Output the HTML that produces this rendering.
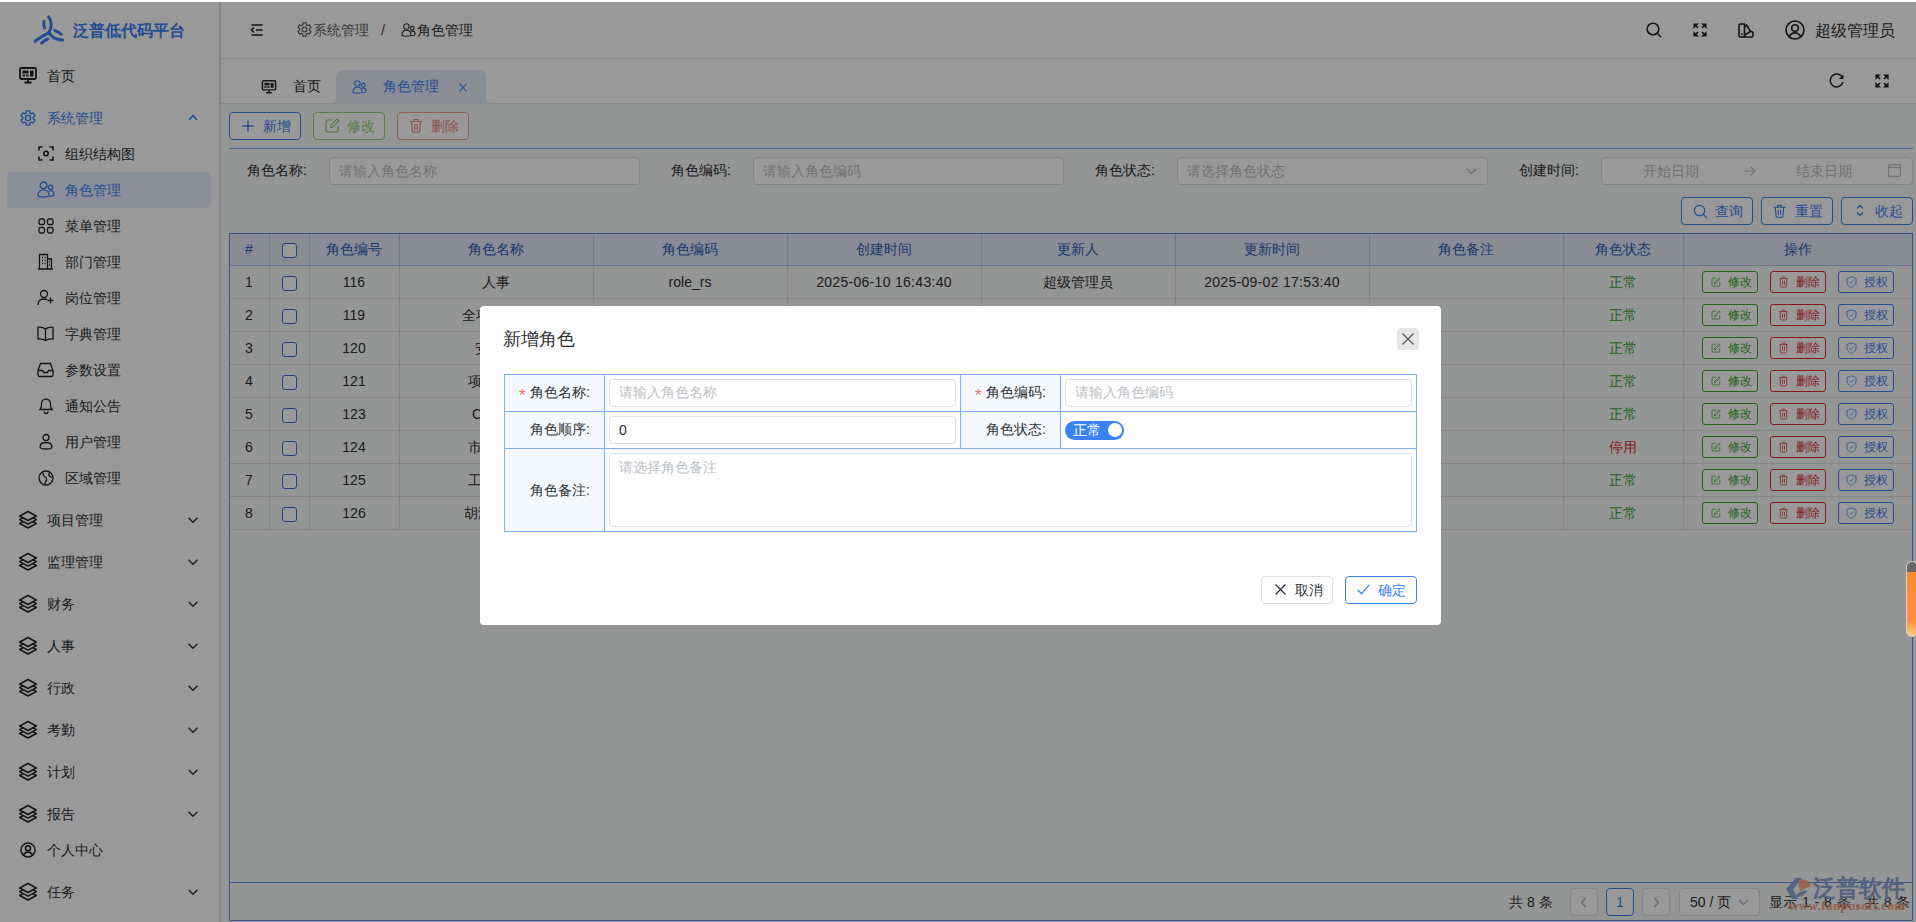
<!DOCTYPE html>
<html><head><meta charset="utf-8">
<style>
*{box-sizing:border-box;margin:0;padding:0}
html,body{width:1916px;height:922px;overflow:hidden;background:#fff}
body{font-family:"Liberation Sans",sans-serif;font-size:14px;color:#303133;position:relative}
.a{position:absolute}
.t{position:absolute;white-space:nowrap;line-height:1}
svg{position:absolute;overflow:visible}
.ic{fill:none;stroke:#303133;stroke-width:1.4;stroke-linecap:round;stroke-linejoin:round}
#side{left:0;top:0;width:221px;height:922px;background:#fff;border-right:2px solid #dcdfe6}
#hdr{left:221px;top:0;width:1695px;height:59px;background:#fff;border-bottom:1px solid #e4e7ed}
#tabs{left:221px;top:59px;width:1695px;height:45px;background:#fff;border-bottom:1px solid #e4e7ed}
#main{left:221px;top:104px;width:1695px;height:818px;background:#f7f8f8}
.btn{position:absolute;height:28px;border:1px solid;border-radius:4px;background:#fff;font-size:14px}
.inp{position:absolute;height:28px;border:1px solid #dcdfe6;border-radius:4px;background:#fff}
.ph{color:#bcbfc6}
#mask{left:0;top:2px;width:1916px;height:920px;background:rgba(0,0,0,.4)}
#topline{left:0;top:0;width:1916px;height:2px;background:#fff}
</style></head><body>
<!-- SIDEBAR -->
<div id="side" class="a"></div>
<div id="hdr" class="a"></div>
<div id="tabs" class="a"></div>
<div id="main" class="a"></div>
<!-- logo -->
<svg style="left:33px;top:15px" width="32" height="30" viewBox="0 0 32 30">
<g fill="none" stroke="#3a7ff5" stroke-width="3" stroke-linecap="round">
<path d="M15.5 1.8 C18.8 5.5 19.2 12.5 16 17.5 C18.5 22 23 25 29.8 25"/>
<path d="M16 17.5 C12 20 6 22.5 2.1 26.3"/>
<path d="M10.9 6.5 C10.6 8.5 10.8 11 11.5 13"/>
<path d="M22 15.6 C24 16.3 26.5 17.5 28.2 19.2"/>
<path d="M8.6 28 C10.5 26.5 12.5 24.8 14.8 24"/>
</g></svg>
<div class="t" style="left:73px;top:23px;font-size:16px;font-weight:bold;color:#3a7ff5;letter-spacing:0px">泛普低代码平台</div>

<!-- 首页 -->
<svg style="left:19px;top:67px" width="18" height="17" viewBox="0 0 18 17">
<rect x="1" y="1" width="16" height="11" rx="1.5" fill="none" stroke="#222" stroke-width="1.8"/>
<rect x="3.5" y="3.5" width="6" height="3" fill="#222"/><rect x="11" y="3.5" width="3.5" height="6" fill="#222"/>
<rect x="3.5" y="7.5" width="2.5" height="2" fill="#222"/><rect x="7" y="7.5" width="2.5" height="2" fill="#222"/>
<path d="M9 12 V15 M5.5 15.5 H12.5" stroke="#222" stroke-width="1.8"/>
</svg>
<div class="t" style="left:47px;top:69px;font-size:14px;color:#303133">首页</div>

<!-- 系统管理 -->
<svg style="left:20px;top:110px" width="16" height="16" viewBox="0 0 16 16"><g fill="none" stroke="#3b82f6" stroke-width="1.4" stroke-linejoin="round"><path d="M6.23 0.92 L9.77 0.92 L9.90 3.05 L11.34 3.88 L13.25 2.93 L15.02 5.99 L13.23 7.17 L13.23 8.83 L15.02 10.01 L13.25 13.07 L11.34 12.12 L9.90 12.95 L9.77 15.08 L6.23 15.08 L6.10 12.95 L4.66 12.12 L2.75 13.07 L0.98 10.01 L2.77 8.83 L2.77 7.17 L0.98 5.99 L2.75 2.93 L4.66 3.88 L6.10 3.05Z"/><circle cx="8" cy="8" r="2.6"/></g></svg>
<div class="t" style="left:47px;top:111px;font-size:14px;color:#3b82f6">系统管理</div>
<svg style="left:188px;top:114px" width="10" height="7" viewBox="0 0 10 7"><path d="M1 6 L5 1.5 L9 6" fill="none" stroke="#3b82f6" stroke-width="1.5"/></svg>

<!-- active bg -->
<div class="a" style="left:7px;top:172px;width:204px;height:36px;background:#e6effd;border-radius:5px"></div>

<!-- sub items -->
<svg style="left:38px;top:146px" width="16" height="15" viewBox="0 0 16 15"><g fill="none" stroke="#222" stroke-width="1.6"><path d="M1 4.5V1h3.5M11.5 1H15v3.5M15 10.5V14h-3.5M4.5 14H1v-3.5"/><circle cx="8" cy="7.5" r="2.2"/></g></svg>
<div class="t" style="left:65px;top:147px">组织结构图</div>

<svg style="left:37px;top:181px" width="18" height="17" viewBox="0 0 18 17"><g fill="none" stroke="#3b82f6" stroke-width="1.3"><circle cx="6.5" cy="4.3" r="3.3"/><path d="M1 14.3C1 10.8 3.5 8.8 6.5 8.8S12 10.8 12 14.3C12 15.5 10.5 16 6.5 16S1 15.5 1 14.3z"/><circle cx="13.6" cy="6.3" r="2.2"/><path d="M11.6 10.2C12.2 9.8 12.9 9.6 13.6 9.6 15.6 9.6 17 11.3 17 13.3 17 14.8 15.8 15.4 12.3 15.4"/></g></svg>
<div class="t" style="left:65px;top:183px;color:#3b82f6">角色管理</div>

<svg style="left:38px;top:218px" width="16" height="16" viewBox="0 0 16 16"><g fill="none" stroke="#222" stroke-width="1.3"><rect x="1" y="1" width="5.5" height="5.5" rx="1.5"/><rect x="9.5" y="1" width="5.5" height="5.5" rx="1.5"/><rect x="1" y="9.5" width="5.5" height="5.5" rx="1.5"/><rect x="9.5" y="9.5" width="5.5" height="5.5" rx="1.5"/></g></svg>
<div class="t" style="left:65px;top:219px">菜单管理</div>

<svg style="left:37px;top:253px" width="17" height="17" viewBox="0 0 17 17"><g fill="none" stroke="#222" stroke-width="1.3"><path d="M1 16H16M2.5 16V1.5H10.5V16M10.5 6H14.5V16"/><path d="M5 4.5h1M7.5 4.5h1M5 7.5h1M7.5 7.5h1M5 10.5h1M7.5 10.5h1M12 9h1M12 12h1"/></g></svg>
<div class="t" style="left:65px;top:255px">部门管理</div>

<svg style="left:37px;top:289px" width="17" height="17" viewBox="0 0 17 17"><g fill="none" stroke="#222" stroke-width="1.3"><circle cx="7" cy="5" r="3.5"/><path d="M1 16c0-4 2.7-6 6-6 1.3 0 2.3.3 3.2.8"/><path d="M13.5 8.5v6M10.5 11.5h6"/></g></svg>
<div class="t" style="left:65px;top:291px">岗位管理</div>

<svg style="left:37px;top:326px" width="17" height="15" viewBox="0 0 17 15"><g fill="none" stroke="#222" stroke-width="1.3"><path d="M8.5 3C6.5 1.5 3.5 1 1 1.3V13c2.5-.3 5.5.2 7.5 1.5C10.5 13.2 13.5 12.7 16 13V1.3C13.5 1 10.5 1.5 8.5 3z"/><path d="M8.5 3V14.5"/></g></svg>
<div class="t" style="left:65px;top:327px">字典管理</div>

<svg style="left:37px;top:362px" width="17" height="15" viewBox="0 0 17 15"><g fill="none" stroke="#222" stroke-width="1.3"><path d="M1 8.5L3.5 1.5H13.5L16 8.5V13a1.5 1.5 0 0 1-1.5 1.5H2.5A1.5 1.5 0 0 1 1 13z"/><path d="M1 8.5H5.5L6.5 10.5H10.5L11.5 8.5H16"/></g></svg>
<div class="t" style="left:65px;top:363px">参数设置</div>

<svg style="left:38px;top:397px" width="16" height="17" viewBox="0 0 16 17"><g fill="none" stroke="#222" stroke-width="1.3"><path d="M2 12.5H14C13 11.5 12.5 10 12.5 8V6.5a4.5 4.5 0 0 0-9 0V8C3.5 10 3 11.5 2 12.5z"/><path d="M6 14.5a2 2 0 0 0 4 0"/></g></svg>
<div class="t" style="left:65px;top:399px">通知公告</div>

<svg style="left:38px;top:433px" width="16" height="17" viewBox="0 0 16 17"><g fill="none" stroke="#222" stroke-width="1.3"><circle cx="8" cy="4.5" r="3"/><path d="M2 14C2 11.2 4.6 9.5 8 9.5S14 11.2 14 14C14 15.3 12.5 16 8 16S2 15.3 2 14z"/></g></svg>
<div class="t" style="left:65px;top:435px">用户管理</div>

<svg style="left:38px;top:470px" width="16" height="16" viewBox="0 0 16 16"><g fill="none" stroke="#222" stroke-width="1.3"><circle cx="8" cy="8" r="7"/><path d="M4.5 2C5.5 4 5 6 7 7s2 3 1 4-1 3-1 4M11.5 2.5c-1 1.5-1 3 .5 4s2.5.5 3 1"/></g></svg>
<div class="t" style="left:65px;top:471px">区域管理</div>
<svg style="left:19px;top:511px" width="18" height="18" viewBox="0 0 18 18"><g fill="#fff" stroke="#222" stroke-width="1.5" stroke-linejoin="round"><path d="M9 8L17.3 12.5 9 17 0.7 12.5z"/><path d="M9 4.2L17.3 8.7 9 13.2 0.7 8.7z"/><path d="M9 0.5L17.3 5 9 9.5 0.7 5z"/></g></svg>
<div class="t" style="left:47px;top:513px">项目管理</div>
<svg style="left:188px;top:517px" width="10" height="6" viewBox="0 0 10 6"><path d="M0.5 0.8 L5 5.2 L9.5 0.8" fill="none" stroke="#303133" stroke-width="1.4"/></svg>
<svg style="left:19px;top:553px" width="18" height="18" viewBox="0 0 18 18"><g fill="#fff" stroke="#222" stroke-width="1.5" stroke-linejoin="round"><path d="M9 8L17.3 12.5 9 17 0.7 12.5z"/><path d="M9 4.2L17.3 8.7 9 13.2 0.7 8.7z"/><path d="M9 0.5L17.3 5 9 9.5 0.7 5z"/></g></svg>
<div class="t" style="left:47px;top:555px">监理管理</div>
<svg style="left:188px;top:559px" width="10" height="6" viewBox="0 0 10 6"><path d="M0.5 0.8 L5 5.2 L9.5 0.8" fill="none" stroke="#303133" stroke-width="1.4"/></svg>
<svg style="left:19px;top:595px" width="18" height="18" viewBox="0 0 18 18"><g fill="#fff" stroke="#222" stroke-width="1.5" stroke-linejoin="round"><path d="M9 8L17.3 12.5 9 17 0.7 12.5z"/><path d="M9 4.2L17.3 8.7 9 13.2 0.7 8.7z"/><path d="M9 0.5L17.3 5 9 9.5 0.7 5z"/></g></svg>
<div class="t" style="left:47px;top:597px">财务</div>
<svg style="left:188px;top:601px" width="10" height="6" viewBox="0 0 10 6"><path d="M0.5 0.8 L5 5.2 L9.5 0.8" fill="none" stroke="#303133" stroke-width="1.4"/></svg>
<svg style="left:19px;top:637px" width="18" height="18" viewBox="0 0 18 18"><g fill="#fff" stroke="#222" stroke-width="1.5" stroke-linejoin="round"><path d="M9 8L17.3 12.5 9 17 0.7 12.5z"/><path d="M9 4.2L17.3 8.7 9 13.2 0.7 8.7z"/><path d="M9 0.5L17.3 5 9 9.5 0.7 5z"/></g></svg>
<div class="t" style="left:47px;top:639px">人事</div>
<svg style="left:188px;top:643px" width="10" height="6" viewBox="0 0 10 6"><path d="M0.5 0.8 L5 5.2 L9.5 0.8" fill="none" stroke="#303133" stroke-width="1.4"/></svg>
<svg style="left:19px;top:679px" width="18" height="18" viewBox="0 0 18 18"><g fill="#fff" stroke="#222" stroke-width="1.5" stroke-linejoin="round"><path d="M9 8L17.3 12.5 9 17 0.7 12.5z"/><path d="M9 4.2L17.3 8.7 9 13.2 0.7 8.7z"/><path d="M9 0.5L17.3 5 9 9.5 0.7 5z"/></g></svg>
<div class="t" style="left:47px;top:681px">行政</div>
<svg style="left:188px;top:685px" width="10" height="6" viewBox="0 0 10 6"><path d="M0.5 0.8 L5 5.2 L9.5 0.8" fill="none" stroke="#303133" stroke-width="1.4"/></svg>
<svg style="left:19px;top:721px" width="18" height="18" viewBox="0 0 18 18"><g fill="#fff" stroke="#222" stroke-width="1.5" stroke-linejoin="round"><path d="M9 8L17.3 12.5 9 17 0.7 12.5z"/><path d="M9 4.2L17.3 8.7 9 13.2 0.7 8.7z"/><path d="M9 0.5L17.3 5 9 9.5 0.7 5z"/></g></svg>
<div class="t" style="left:47px;top:723px">考勤</div>
<svg style="left:188px;top:727px" width="10" height="6" viewBox="0 0 10 6"><path d="M0.5 0.8 L5 5.2 L9.5 0.8" fill="none" stroke="#303133" stroke-width="1.4"/></svg>
<svg style="left:19px;top:763px" width="18" height="18" viewBox="0 0 18 18"><g fill="#fff" stroke="#222" stroke-width="1.5" stroke-linejoin="round"><path d="M9 8L17.3 12.5 9 17 0.7 12.5z"/><path d="M9 4.2L17.3 8.7 9 13.2 0.7 8.7z"/><path d="M9 0.5L17.3 5 9 9.5 0.7 5z"/></g></svg>
<div class="t" style="left:47px;top:765px">计划</div>
<svg style="left:188px;top:769px" width="10" height="6" viewBox="0 0 10 6"><path d="M0.5 0.8 L5 5.2 L9.5 0.8" fill="none" stroke="#303133" stroke-width="1.4"/></svg>
<svg style="left:19px;top:805px" width="18" height="18" viewBox="0 0 18 18"><g fill="#fff" stroke="#222" stroke-width="1.5" stroke-linejoin="round"><path d="M9 8L17.3 12.5 9 17 0.7 12.5z"/><path d="M9 4.2L17.3 8.7 9 13.2 0.7 8.7z"/><path d="M9 0.5L17.3 5 9 9.5 0.7 5z"/></g></svg>
<div class="t" style="left:47px;top:807px">报告</div>
<svg style="left:188px;top:811px" width="10" height="6" viewBox="0 0 10 6"><path d="M0.5 0.8 L5 5.2 L9.5 0.8" fill="none" stroke="#303133" stroke-width="1.4"/></svg>
<svg style="left:20px;top:842px" width="16" height="16" viewBox="0 0 16 16"><g fill="none" stroke="#222" stroke-width="1.5"><circle cx="8" cy="8" r="7"/><circle cx="8" cy="6.3" r="2.5"/><path d="M3.5 13c1-2 2.6-3 4.5-3s3.5 1 4.5 3"/></g></svg>
<div class="t" style="left:47px;top:843px">个人中心</div>
<svg style="left:19px;top:883px" width="18" height="18" viewBox="0 0 18 18"><g fill="#fff" stroke="#222" stroke-width="1.5" stroke-linejoin="round"><path d="M9 8L17.3 12.5 9 17 0.7 12.5z"/><path d="M9 4.2L17.3 8.7 9 13.2 0.7 8.7z"/><path d="M9 0.5L17.3 5 9 9.5 0.7 5z"/></g></svg>
<div class="t" style="left:47px;top:885px">任务</div>
<svg style="left:188px;top:889px" width="10" height="6" viewBox="0 0 10 6"><path d="M0.5 0.8 L5 5.2 L9.5 0.8" fill="none" stroke="#303133" stroke-width="1.4"/></svg>
<!-- header -->
<svg style="left:250px;top:24px" width="13" height="12" viewBox="0 0 13 12"><g fill="none" stroke="#222" stroke-width="1.6"><path d="M1.5 1H12.5M6 6H12.5M1.5 11H12.5"/><path d="M4 3.5L1.5 6 4 8.5"/></g></svg>
<svg style="left:297px;top:22px" width="15" height="15" viewBox="0 0 16 16"><g fill="none" stroke="#606266" stroke-width="1.3" stroke-linejoin="round"><path d="M6.23 0.92 L9.77 0.92 L9.90 3.05 L11.34 3.88 L13.25 2.93 L15.02 5.99 L13.23 7.17 L13.23 8.83 L15.02 10.01 L13.25 13.07 L11.34 12.12 L9.90 12.95 L9.77 15.08 L6.23 15.08 L6.10 12.95 L4.66 12.12 L2.75 13.07 L0.98 10.01 L2.77 8.83 L2.77 7.17 L0.98 5.99 L2.75 2.93 L4.66 3.88 L6.10 3.05Z"/><circle cx="8" cy="8" r="2.6"/></g></svg>
<div class="t" style="left:313px;top:23px;color:#606266">系统管理</div>
<div class="t" style="left:381px;top:22px;color:#555;font-size:15px">/</div>
<svg style="left:400px;top:23px" width="17" height="14" viewBox="0 0 18 17"><g fill="none" stroke="#303133" stroke-width="1.3"><circle cx="6.5" cy="4.3" r="3.3"/><path d="M1 14.3C1 10.8 3.5 8.8 6.5 8.8S12 10.8 12 14.3C12 15.5 10.5 16 6.5 16S1 15.5 1 14.3z"/><circle cx="13.6" cy="6.3" r="2.2"/><path d="M11.6 10.2C12.2 9.8 12.9 9.6 13.6 9.6 15.6 9.6 17 11.3 17 13.3 17 14.8 15.8 15.4 12.3 15.4"/></g></svg>
<div class="t" style="left:417px;top:23px;color:#303133">角色管理</div>

<svg style="left:1646px;top:22px" width="16" height="16" viewBox="0 0 16 16"><g fill="none" stroke="#222" stroke-width="1.6"><circle cx="7" cy="7" r="5.8"/><path d="M11.2 11.2L15 15"/></g></svg>
<svg style="left:1693px;top:23px" width="14" height="14" viewBox="0 0 14 14"><g fill="#222" stroke="#222" stroke-width="1.2"><path d="M1 1h3.5L1 4.5z M13 1H9.5L13 4.5z M1 13h3.5L1 9.5z M13 13H9.5L13 9.5z"/><path d="M1.5 1.5L5 5M12.5 1.5L9 5M1.5 12.5L5 9M12.5 12.5L9 9" stroke-width="1.6"/></g></svg>
<svg style="left:1738px;top:23px" width="16" height="15" viewBox="0 0 16 15"><g fill="none" stroke="#222" stroke-width="1.6" stroke-linejoin="round"><path d="M2.5 1H6.5V14H2.5A1.5 1.5 0 0 1 1 12.5V2.5A1.5 1.5 0 0 1 2.5 1z"/><path d="M6.5 3.5L8.5 2 12.5 8.5 6.5 12"/><path d="M6.5 14H13.5A1.5 1.5 0 0 0 15 12.5V10A1.5 1.5 0 0 0 13.5 8.5H11"/></g><circle cx="4" cy="11" r="0.9" fill="#222"/></svg>
<svg style="left:1785px;top:20px" width="20" height="20" viewBox="0 0 20 20"><g fill="none" stroke="#222" stroke-width="1.6"><circle cx="10" cy="10" r="9"/><circle cx="10" cy="8" r="3.3"/><path d="M4.3 16.5c1.3-2.4 3.3-3.6 5.7-3.6s4.4 1.2 5.7 3.6"/></g></svg>
<div class="t" style="left:1815px;top:23px;font-size:16px;color:#303133">超级管理员</div>

<!-- tabs -->
<svg style="left:261px;top:80px" width="16" height="14" viewBox="0 0 18 17"><rect x="1" y="1" width="16" height="11" rx="1.5" fill="none" stroke="#222" stroke-width="1.8"/><rect x="3.5" y="3.5" width="6" height="3" fill="#222"/><rect x="11" y="3.5" width="3.5" height="6" fill="#222"/><rect x="3.5" y="7.5" width="2.5" height="2" fill="#222"/><rect x="7" y="7.5" width="2.5" height="2" fill="#222"/><path d="M9 12 V15 M5.5 15.5 H12.5" stroke="#222" stroke-width="1.8"/></svg>
<div class="t" style="left:293px;top:79px;color:#303133">首页</div>
<svg style="left:328px;top:69px" width="166" height="35" viewBox="0 0 166 35"><path d="M0 34.5 C6 34.5 8 32 8 27 V9 C8 4 11 1 16 1 H150 C155 1 158 4 158 9 V27 C158 32 160 34.5 166 34.5 Z" fill="#e3ecfb"/></svg>
<svg style="left:352px;top:80px" width="15" height="14" viewBox="0 0 18 17"><g fill="none" stroke="#3b82f6" stroke-width="1.3"><circle cx="6.5" cy="4.3" r="3.3"/><path d="M1 14.3C1 10.8 3.5 8.8 6.5 8.8S12 10.8 12 14.3C12 15.5 10.5 16 6.5 16S1 15.5 1 14.3z"/><circle cx="13.6" cy="6.3" r="2.2"/><path d="M11.6 10.2C12.2 9.8 12.9 9.6 13.6 9.6 15.6 9.6 17 11.3 17 13.3 17 14.8 15.8 15.4 12.3 15.4"/></g></svg>
<div class="t" style="left:383px;top:79px;color:#3b82f6">角色管理</div>
<svg style="left:459px;top:83px" width="8" height="9" viewBox="0 0 8 9"><path d="M.5 .5L7.5 8.5M7.5 .5L.5 8.5" fill="none" stroke="#3b82f6" stroke-width="1.1"/></svg>
<svg style="left:1829px;top:73px" width="15" height="15" viewBox="0 0 15 15"><g fill="none" stroke="#222" stroke-width="1.5"><path d="M13.5 4.5A6.5 6.5 0 1 0 14 9"/></g><path d="M14.5 1.5V6H10z" fill="#222"/></svg>
<svg style="left:1875px;top:74px" width="14" height="14" viewBox="0 0 14 14"><g fill="#222" stroke="#222" stroke-width="1.2"><path d="M1 1h3.5L1 4.5z M13 1H9.5L13 4.5z M1 13h3.5L1 9.5z M13 13H9.5L13 9.5z"/><path d="M1.5 1.5L5 5M12.5 1.5L9 5M1.5 12.5L5 9M12.5 12.5L9 9" stroke-width="1.6"/></g></svg>

<div class="btn" style="left:229px;top:112px;width:72px;border-color:#3b82f6"></div>
<svg style="left:242px;top:120px" width="12" height="12" viewBox="0 0 12 12"><path d="M6 0.5V11.5M0.5 6H11.5" stroke="#3b82f6" stroke-width="1.4"/></svg>
<div class="t" style="left:263px;top:119px;color:#3b82f6">新增</div>
<div class="btn" style="left:313px;top:112px;width:72px;border-color:#95d475;background:#fff"></div>
<svg style="left:325px;top:118px" width="15" height="15" viewBox="0 0 15 15"><g fill="none" stroke="#8fd06e" stroke-width="1.2" stroke-linecap="round"><path d="M7 2H2.5A1.5 1.5 0 0 0 1 3.5v9A1.5 1.5 0 0 0 2.5 14h9a1.5 1.5 0 0 0 1.5-1.5V8"/><path d="M5.5 9.5L6 7 12 1l2 2-6 6z"/></g></svg>
<div class="t" style="left:347px;top:119px;color:#8fd06e">修改</div>
<div class="btn" style="left:397px;top:112px;width:72px;border-color:#f39b9b;background:#fff"></div>
<svg style="left:409px;top:118px" width="14" height="15" viewBox="0 0 14 15"><g fill="none" stroke="#f08a8a" stroke-width="1.2" stroke-linecap="round"><path d="M1 3.5H13M5 3.5V1.5H9V3.5M2.5 3.5L3.3 13a1.3 1.3 0 0 0 1.3 1.2h4.8A1.3 1.3 0 0 0 10.7 13L11.5 3.5M5.7 6.5V11.5M8.3 6.5V11.5"/></g></svg>
<div class="t" style="left:431px;top:119px;color:#f08a8a">删除</div>
<div class="a" style="left:229px;top:148px;width:1684px;height:1px;background:#7aa6f0"></div>
<div class="t" style="left:247px;top:163px;color:#303133">角色名称:</div>
<div class="inp" style="left:329px;top:157px;width:311px;height:28px"></div>
<div class="t ph" style="left:339px;top:164px">请输入角色名称</div>
<div class="t" style="left:671px;top:163px;color:#303133">角色编码:</div>
<div class="inp" style="left:753px;top:157px;width:311px;height:28px"></div>
<div class="t ph" style="left:763px;top:164px">请输入角色编码</div>
<div class="t" style="left:1095px;top:163px;color:#303133">角色状态:</div>
<div class="inp" style="left:1177px;top:157px;width:311px;height:28px"></div>
<div class="t ph" style="left:1187px;top:164px">请选择角色状态</div>
<svg style="left:1466px;top:168px" width="11" height="7" viewBox="0 0 11 7"><path d="M1 1L5.5 5.5 10 1" fill="none" stroke="#a8abb2" stroke-width="1.1"/></svg>
<div class="t" style="left:1519px;top:163px;color:#303133">创建时间:</div>
<div class="inp" style="left:1601px;top:157px;width:312px;height:28px"></div>
<div class="t ph" style="left:1643px;top:164px">开始日期</div>
<svg style="left:1743px;top:166px" width="13" height="10" viewBox="0 0 13 10"><path d="M0.5 5H12M8 1L12 5 8 9" fill="none" stroke="#bcbfc6" stroke-width="1.1"/></svg>
<div class="t ph" style="left:1796px;top:164px">结束日期</div>
<svg style="left:1888px;top:164px" width="13" height="13" viewBox="0 0 13 13"><rect x="0.6" y="0.6" width="11.8" height="11.8" rx="1.2" fill="none" stroke="#bcbfc6" stroke-width="1.1"/><path d="M0.6 3.5H12.4" stroke="#bcbfc6" stroke-width="1.1"/></svg>
<div class="btn" style="left:1681px;top:197px;width:72px;border-color:#3b82f6"></div>
<div class="t" style="left:1715px;top:204px;color:#3b82f6">查询</div>
<div class="btn" style="left:1761px;top:197px;width:72px;border-color:#3b82f6"></div>
<div class="t" style="left:1795px;top:204px;color:#3b82f6">重置</div>
<div class="btn" style="left:1841px;top:197px;width:72px;border-color:#3b82f6"></div>
<div class="t" style="left:1875px;top:204px;color:#3b82f6">收起</div>
<svg style="left:1693px;top:204px" width="15" height="15" viewBox="0 0 16 16"><g fill="none" stroke="#3b82f6" stroke-width="1.3"><circle cx="7" cy="7" r="5.5"/><path d="M11 11L15 15"/></g></svg>
<svg style="left:1773px;top:203px" width="13" height="16" viewBox="0 0 14 15"><g fill="none" stroke="#3b82f6" stroke-width="1.2" stroke-linecap="round"><path d="M1 3.5H13M5 3.5V1.5H9V3.5M2.5 3.5L3.3 13a1.3 1.3 0 0 0 1.3 1.2h4.8A1.3 1.3 0 0 0 10.7 13L11.5 3.5M5.7 6.5V11.5M8.3 6.5V11.5"/></g></svg>
<svg style="left:1856px;top:204px" width="8" height="13" viewBox="0 0 8 13"><path d="M1 4.5L4 1.5 7 4.5M1 8.5L4 11.5 7 8.5" fill="none" stroke="#3b82f6" stroke-width="1.3"/></svg>
<div class="a" style="left:229px;top:233px;width:1684px;height:688px;border:1px solid #5a90ea;background:transparent"></div>
<div class="a" style="left:229px;top:882px;width:1684px;height:1px;background:#5a90ea"></div>
<div class="a" style="left:230px;top:234px;width:1682px;height:31px;background:#e1e9f9"></div>
<div class="a" style="left:269px;top:234px;width:1px;height:31px;background:#bcd0f3"></div>
<div class="a" style="left:269px;top:265px;width:1px;height:264px;background:#dfe0e2"></div>
<div class="a" style="left:309px;top:234px;width:1px;height:31px;background:#bcd0f3"></div>
<div class="a" style="left:309px;top:265px;width:1px;height:264px;background:#dfe0e2"></div>
<div class="a" style="left:399px;top:234px;width:1px;height:31px;background:#bcd0f3"></div>
<div class="a" style="left:399px;top:265px;width:1px;height:264px;background:#dfe0e2"></div>
<div class="a" style="left:593px;top:234px;width:1px;height:31px;background:#bcd0f3"></div>
<div class="a" style="left:593px;top:265px;width:1px;height:264px;background:#dfe0e2"></div>
<div class="a" style="left:787px;top:234px;width:1px;height:31px;background:#bcd0f3"></div>
<div class="a" style="left:787px;top:265px;width:1px;height:264px;background:#dfe0e2"></div>
<div class="a" style="left:981px;top:234px;width:1px;height:31px;background:#bcd0f3"></div>
<div class="a" style="left:981px;top:265px;width:1px;height:264px;background:#dfe0e2"></div>
<div class="a" style="left:1175px;top:234px;width:1px;height:31px;background:#bcd0f3"></div>
<div class="a" style="left:1175px;top:265px;width:1px;height:264px;background:#dfe0e2"></div>
<div class="a" style="left:1369px;top:234px;width:1px;height:31px;background:#bcd0f3"></div>
<div class="a" style="left:1369px;top:265px;width:1px;height:264px;background:#dfe0e2"></div>
<div class="a" style="left:1563px;top:234px;width:1px;height:31px;background:#bcd0f3"></div>
<div class="a" style="left:1563px;top:265px;width:1px;height:264px;background:#dfe0e2"></div>
<div class="a" style="left:1683px;top:234px;width:1px;height:31px;background:#bcd0f3"></div>
<div class="a" style="left:1683px;top:265px;width:1px;height:264px;background:#dfe0e2"></div>
<div class="a" style="left:230px;top:265px;width:1682px;height:1px;background:#a8c2ee"></div>
<div class="a" style="left:230px;top:298px;width:1682px;height:1px;background:#dfe0e2"></div>
<div class="a" style="left:230px;top:331px;width:1682px;height:1px;background:#dfe0e2"></div>
<div class="a" style="left:230px;top:364px;width:1682px;height:1px;background:#dfe0e2"></div>
<div class="a" style="left:230px;top:397px;width:1682px;height:1px;background:#dfe0e2"></div>
<div class="a" style="left:230px;top:430px;width:1682px;height:1px;background:#dfe0e2"></div>
<div class="a" style="left:230px;top:463px;width:1682px;height:1px;background:#dfe0e2"></div>
<div class="a" style="left:230px;top:496px;width:1682px;height:1px;background:#dfe0e2"></div>
<div class="a" style="left:230px;top:529px;width:1682px;height:1px;background:#dfe0e2"></div>
<div class="t" style="left:229px;width:40px;text-align:center;top:242px;color:#2f5fb3">#</div>
<div class="t" style="left:309px;width:90px;text-align:center;top:242px;color:#2f5fb3">角色编号</div>
<div class="t" style="left:399px;width:194px;text-align:center;top:242px;color:#2f5fb3">角色名称</div>
<div class="t" style="left:593px;width:194px;text-align:center;top:242px;color:#2f5fb3">角色编码</div>
<div class="t" style="left:787px;width:194px;text-align:center;top:242px;color:#2f5fb3">创建时间</div>
<div class="t" style="left:981px;width:194px;text-align:center;top:242px;color:#2f5fb3">更新人</div>
<div class="t" style="left:1175px;width:194px;text-align:center;top:242px;color:#2f5fb3">更新时间</div>
<div class="t" style="left:1369px;width:194px;text-align:center;top:242px;color:#2f5fb3">角色备注</div>
<div class="t" style="left:1563px;width:120px;text-align:center;top:242px;color:#2f5fb3">角色状态</div>
<div class="t" style="left:1683px;width:229px;text-align:center;top:242px;color:#2f5fb3">操作</div>
<div class="a" style="left:282px;top:243px;width:15px;height:15px;border:1.3px solid #3b6fd0;border-radius:3px;background:#fff"></div>
<div class="a" style="left:282px;top:276px;width:15px;height:15px;border:1.3px solid #3b6fd0;border-radius:3px;background:#fff"></div>
<div class="a" style="left:282px;top:309px;width:15px;height:15px;border:1.3px solid #3b6fd0;border-radius:3px;background:#fff"></div>
<div class="a" style="left:282px;top:342px;width:15px;height:15px;border:1.3px solid #3b6fd0;border-radius:3px;background:#fff"></div>
<div class="a" style="left:282px;top:375px;width:15px;height:15px;border:1.3px solid #3b6fd0;border-radius:3px;background:#fff"></div>
<div class="a" style="left:282px;top:408px;width:15px;height:15px;border:1.3px solid #3b6fd0;border-radius:3px;background:#fff"></div>
<div class="a" style="left:282px;top:441px;width:15px;height:15px;border:1.3px solid #3b6fd0;border-radius:3px;background:#fff"></div>
<div class="a" style="left:282px;top:474px;width:15px;height:15px;border:1.3px solid #3b6fd0;border-radius:3px;background:#fff"></div>
<div class="a" style="left:282px;top:507px;width:15px;height:15px;border:1.3px solid #3b6fd0;border-radius:3px;background:#fff"></div>
<div class="t" style="left:229px;width:40px;text-align:center;top:275px">1</div>
<div class="t" style="left:309px;width:90px;text-align:center;top:275px">116</div>
<div class="t" style="left:399px;width:194px;text-align:center;top:275px">人事</div>
<div class="t" style="left:593px;width:194px;text-align:center;top:275px">role_rs</div>
<div class="t" style="left:787px;width:194px;text-align:center;top:275px;letter-spacing:0.3px">2025-06-10 16:43:40</div>
<div class="t" style="left:981px;width:194px;text-align:center;top:275px">超级管理员</div>
<div class="t" style="left:1175px;width:194px;text-align:center;top:275px;letter-spacing:0.3px">2025-09-02 17:53:40</div>
<div class="t" style="left:1563px;width:120px;text-align:center;top:275px;color:#3aa82a">正常</div>
<div class="a" style="left:1702px;top:271px;width:56px;height:22px;border:1px solid #3aa82a;border-radius:3px;background:#fff"></div>
<div class="t" style="left:1728px;top:276px;font-size:12px;color:#3aa82a">修改</div>
<svg style="left:1711px;top:277px" width="10" height="10" viewBox="0 0 10 10"><g fill="none" stroke="#3aa82a" stroke-opacity=".75" stroke-width="1" stroke-linecap="round" stroke-linejoin="round"><path d="M4.5 1.2H1.8A.8.8 0 0 0 1 2v6.2a.8.8 0 0 0 .8.8H8a.8.8 0 0 0 .8-.8V5.5"/><path d="M3.5 6.5L3.8 5 8 .8 9.2 2 5 6.2z"/></g></svg>
<div class="a" style="left:1770px;top:271px;width:56px;height:22px;border:1px solid #e02a2a;border-radius:3px;background:#fff"></div>
<div class="t" style="left:1796px;top:276px;font-size:12px;color:#e02a2a">删除</div>
<svg style="left:1779px;top:276px" width="9" height="12" viewBox="0 0 9 12"><g fill="none" stroke="#e02a2a" stroke-opacity=".75" stroke-width="1" stroke-linecap="round" stroke-linejoin="round"><path d="M3 1.2H6M1 2.6H8"/><path d="M1.3 2.6V9.5A1.5 1.5 0 0 0 2.8 11H6.2A1.5 1.5 0 0 0 7.7 9.5V2.6"/><path d="M3.5 5V8.5M5.5 5V8.5"/></g></svg>
<div class="a" style="left:1838px;top:271px;width:56px;height:22px;border:1px solid #3b82f6;border-radius:3px;background:#fff"></div>
<div class="t" style="left:1864px;top:276px;font-size:12px;color:#3b82f6">授权</div>
<svg style="left:1846px;top:276px" width="11" height="12" viewBox="0 0 11 12"><g fill="none" stroke="#3b82f6" stroke-opacity=".75" stroke-width="1" stroke-linejoin="round"><path d="M5.5 0.8L10 2.5V6c0 2.7-2 4.5-4.5 5.3C3 10.5 1 8.7 1 6V2.5z"/><path d="M3.7 6.1L5 7.3 7.4 4.8"/></g></svg>
<div class="t" style="left:229px;width:40px;text-align:center;top:308px">2</div>
<div class="t" style="left:309px;width:90px;text-align:center;top:308px">119</div>
<div class="t" style="left:462px;top:308px">全项目管理</div>
<div class="t" style="left:1563px;width:120px;text-align:center;top:308px;color:#3aa82a">正常</div>
<div class="a" style="left:1702px;top:304px;width:56px;height:22px;border:1px solid #3aa82a;border-radius:3px;background:#fff"></div>
<div class="t" style="left:1728px;top:309px;font-size:12px;color:#3aa82a">修改</div>
<svg style="left:1711px;top:310px" width="10" height="10" viewBox="0 0 10 10"><g fill="none" stroke="#3aa82a" stroke-opacity=".75" stroke-width="1" stroke-linecap="round" stroke-linejoin="round"><path d="M4.5 1.2H1.8A.8.8 0 0 0 1 2v6.2a.8.8 0 0 0 .8.8H8a.8.8 0 0 0 .8-.8V5.5"/><path d="M3.5 6.5L3.8 5 8 .8 9.2 2 5 6.2z"/></g></svg>
<div class="a" style="left:1770px;top:304px;width:56px;height:22px;border:1px solid #e02a2a;border-radius:3px;background:#fff"></div>
<div class="t" style="left:1796px;top:309px;font-size:12px;color:#e02a2a">删除</div>
<svg style="left:1779px;top:309px" width="9" height="12" viewBox="0 0 9 12"><g fill="none" stroke="#e02a2a" stroke-opacity=".75" stroke-width="1" stroke-linecap="round" stroke-linejoin="round"><path d="M3 1.2H6M1 2.6H8"/><path d="M1.3 2.6V9.5A1.5 1.5 0 0 0 2.8 11H6.2A1.5 1.5 0 0 0 7.7 9.5V2.6"/><path d="M3.5 5V8.5M5.5 5V8.5"/></g></svg>
<div class="a" style="left:1838px;top:304px;width:56px;height:22px;border:1px solid #3b82f6;border-radius:3px;background:#fff"></div>
<div class="t" style="left:1864px;top:309px;font-size:12px;color:#3b82f6">授权</div>
<svg style="left:1846px;top:309px" width="11" height="12" viewBox="0 0 11 12"><g fill="none" stroke="#3b82f6" stroke-opacity=".75" stroke-width="1" stroke-linejoin="round"><path d="M5.5 0.8L10 2.5V6c0 2.7-2 4.5-4.5 5.3C3 10.5 1 8.7 1 6V2.5z"/><path d="M3.7 6.1L5 7.3 7.4 4.8"/></g></svg>
<div class="t" style="left:229px;width:40px;text-align:center;top:341px">3</div>
<div class="t" style="left:309px;width:90px;text-align:center;top:341px">120</div>
<div class="t" style="left:475px;top:341px">安全员</div>
<div class="t" style="left:1563px;width:120px;text-align:center;top:341px;color:#3aa82a">正常</div>
<div class="a" style="left:1702px;top:337px;width:56px;height:22px;border:1px solid #3aa82a;border-radius:3px;background:#fff"></div>
<div class="t" style="left:1728px;top:342px;font-size:12px;color:#3aa82a">修改</div>
<svg style="left:1711px;top:343px" width="10" height="10" viewBox="0 0 10 10"><g fill="none" stroke="#3aa82a" stroke-opacity=".75" stroke-width="1" stroke-linecap="round" stroke-linejoin="round"><path d="M4.5 1.2H1.8A.8.8 0 0 0 1 2v6.2a.8.8 0 0 0 .8.8H8a.8.8 0 0 0 .8-.8V5.5"/><path d="M3.5 6.5L3.8 5 8 .8 9.2 2 5 6.2z"/></g></svg>
<div class="a" style="left:1770px;top:337px;width:56px;height:22px;border:1px solid #e02a2a;border-radius:3px;background:#fff"></div>
<div class="t" style="left:1796px;top:342px;font-size:12px;color:#e02a2a">删除</div>
<svg style="left:1779px;top:342px" width="9" height="12" viewBox="0 0 9 12"><g fill="none" stroke="#e02a2a" stroke-opacity=".75" stroke-width="1" stroke-linecap="round" stroke-linejoin="round"><path d="M3 1.2H6M1 2.6H8"/><path d="M1.3 2.6V9.5A1.5 1.5 0 0 0 2.8 11H6.2A1.5 1.5 0 0 0 7.7 9.5V2.6"/><path d="M3.5 5V8.5M5.5 5V8.5"/></g></svg>
<div class="a" style="left:1838px;top:337px;width:56px;height:22px;border:1px solid #3b82f6;border-radius:3px;background:#fff"></div>
<div class="t" style="left:1864px;top:342px;font-size:12px;color:#3b82f6">授权</div>
<svg style="left:1846px;top:342px" width="11" height="12" viewBox="0 0 11 12"><g fill="none" stroke="#3b82f6" stroke-opacity=".75" stroke-width="1" stroke-linejoin="round"><path d="M5.5 0.8L10 2.5V6c0 2.7-2 4.5-4.5 5.3C3 10.5 1 8.7 1 6V2.5z"/><path d="M3.7 6.1L5 7.3 7.4 4.8"/></g></svg>
<div class="t" style="left:229px;width:40px;text-align:center;top:374px">4</div>
<div class="t" style="left:309px;width:90px;text-align:center;top:374px">121</div>
<div class="t" style="left:468px;top:374px">项目经理</div>
<div class="t" style="left:1563px;width:120px;text-align:center;top:374px;color:#3aa82a">正常</div>
<div class="a" style="left:1702px;top:370px;width:56px;height:22px;border:1px solid #3aa82a;border-radius:3px;background:#fff"></div>
<div class="t" style="left:1728px;top:375px;font-size:12px;color:#3aa82a">修改</div>
<svg style="left:1711px;top:376px" width="10" height="10" viewBox="0 0 10 10"><g fill="none" stroke="#3aa82a" stroke-opacity=".75" stroke-width="1" stroke-linecap="round" stroke-linejoin="round"><path d="M4.5 1.2H1.8A.8.8 0 0 0 1 2v6.2a.8.8 0 0 0 .8.8H8a.8.8 0 0 0 .8-.8V5.5"/><path d="M3.5 6.5L3.8 5 8 .8 9.2 2 5 6.2z"/></g></svg>
<div class="a" style="left:1770px;top:370px;width:56px;height:22px;border:1px solid #e02a2a;border-radius:3px;background:#fff"></div>
<div class="t" style="left:1796px;top:375px;font-size:12px;color:#e02a2a">删除</div>
<svg style="left:1779px;top:375px" width="9" height="12" viewBox="0 0 9 12"><g fill="none" stroke="#e02a2a" stroke-opacity=".75" stroke-width="1" stroke-linecap="round" stroke-linejoin="round"><path d="M3 1.2H6M1 2.6H8"/><path d="M1.3 2.6V9.5A1.5 1.5 0 0 0 2.8 11H6.2A1.5 1.5 0 0 0 7.7 9.5V2.6"/><path d="M3.5 5V8.5M5.5 5V8.5"/></g></svg>
<div class="a" style="left:1838px;top:370px;width:56px;height:22px;border:1px solid #3b82f6;border-radius:3px;background:#fff"></div>
<div class="t" style="left:1864px;top:375px;font-size:12px;color:#3b82f6">授权</div>
<svg style="left:1846px;top:375px" width="11" height="12" viewBox="0 0 11 12"><g fill="none" stroke="#3b82f6" stroke-opacity=".75" stroke-width="1" stroke-linejoin="round"><path d="M5.5 0.8L10 2.5V6c0 2.7-2 4.5-4.5 5.3C3 10.5 1 8.7 1 6V2.5z"/><path d="M3.7 6.1L5 7.3 7.4 4.8"/></g></svg>
<div class="t" style="left:229px;width:40px;text-align:center;top:407px">5</div>
<div class="t" style="left:309px;width:90px;text-align:center;top:407px">123</div>
<div class="t" style="left:472px;top:407px">CEO</div>
<div class="t" style="left:1563px;width:120px;text-align:center;top:407px;color:#3aa82a">正常</div>
<div class="a" style="left:1702px;top:403px;width:56px;height:22px;border:1px solid #3aa82a;border-radius:3px;background:#fff"></div>
<div class="t" style="left:1728px;top:408px;font-size:12px;color:#3aa82a">修改</div>
<svg style="left:1711px;top:409px" width="10" height="10" viewBox="0 0 10 10"><g fill="none" stroke="#3aa82a" stroke-opacity=".75" stroke-width="1" stroke-linecap="round" stroke-linejoin="round"><path d="M4.5 1.2H1.8A.8.8 0 0 0 1 2v6.2a.8.8 0 0 0 .8.8H8a.8.8 0 0 0 .8-.8V5.5"/><path d="M3.5 6.5L3.8 5 8 .8 9.2 2 5 6.2z"/></g></svg>
<div class="a" style="left:1770px;top:403px;width:56px;height:22px;border:1px solid #e02a2a;border-radius:3px;background:#fff"></div>
<div class="t" style="left:1796px;top:408px;font-size:12px;color:#e02a2a">删除</div>
<svg style="left:1779px;top:408px" width="9" height="12" viewBox="0 0 9 12"><g fill="none" stroke="#e02a2a" stroke-opacity=".75" stroke-width="1" stroke-linecap="round" stroke-linejoin="round"><path d="M3 1.2H6M1 2.6H8"/><path d="M1.3 2.6V9.5A1.5 1.5 0 0 0 2.8 11H6.2A1.5 1.5 0 0 0 7.7 9.5V2.6"/><path d="M3.5 5V8.5M5.5 5V8.5"/></g></svg>
<div class="a" style="left:1838px;top:403px;width:56px;height:22px;border:1px solid #3b82f6;border-radius:3px;background:#fff"></div>
<div class="t" style="left:1864px;top:408px;font-size:12px;color:#3b82f6">授权</div>
<svg style="left:1846px;top:408px" width="11" height="12" viewBox="0 0 11 12"><g fill="none" stroke="#3b82f6" stroke-opacity=".75" stroke-width="1" stroke-linejoin="round"><path d="M5.5 0.8L10 2.5V6c0 2.7-2 4.5-4.5 5.3C3 10.5 1 8.7 1 6V2.5z"/><path d="M3.7 6.1L5 7.3 7.4 4.8"/></g></svg>
<div class="t" style="left:229px;width:40px;text-align:center;top:440px">6</div>
<div class="t" style="left:309px;width:90px;text-align:center;top:440px">124</div>
<div class="t" style="left:468px;top:440px">市场部</div>
<div class="t" style="left:1563px;width:120px;text-align:center;top:440px;color:#e02a2a">停用</div>
<div class="a" style="left:1702px;top:436px;width:56px;height:22px;border:1px solid #3aa82a;border-radius:3px;background:#fff"></div>
<div class="t" style="left:1728px;top:441px;font-size:12px;color:#3aa82a">修改</div>
<svg style="left:1711px;top:442px" width="10" height="10" viewBox="0 0 10 10"><g fill="none" stroke="#3aa82a" stroke-opacity=".75" stroke-width="1" stroke-linecap="round" stroke-linejoin="round"><path d="M4.5 1.2H1.8A.8.8 0 0 0 1 2v6.2a.8.8 0 0 0 .8.8H8a.8.8 0 0 0 .8-.8V5.5"/><path d="M3.5 6.5L3.8 5 8 .8 9.2 2 5 6.2z"/></g></svg>
<div class="a" style="left:1770px;top:436px;width:56px;height:22px;border:1px solid #e02a2a;border-radius:3px;background:#fff"></div>
<div class="t" style="left:1796px;top:441px;font-size:12px;color:#e02a2a">删除</div>
<svg style="left:1779px;top:441px" width="9" height="12" viewBox="0 0 9 12"><g fill="none" stroke="#e02a2a" stroke-opacity=".75" stroke-width="1" stroke-linecap="round" stroke-linejoin="round"><path d="M3 1.2H6M1 2.6H8"/><path d="M1.3 2.6V9.5A1.5 1.5 0 0 0 2.8 11H6.2A1.5 1.5 0 0 0 7.7 9.5V2.6"/><path d="M3.5 5V8.5M5.5 5V8.5"/></g></svg>
<div class="a" style="left:1838px;top:436px;width:56px;height:22px;border:1px solid #3b82f6;border-radius:3px;background:#fff"></div>
<div class="t" style="left:1864px;top:441px;font-size:12px;color:#3b82f6">授权</div>
<svg style="left:1846px;top:441px" width="11" height="12" viewBox="0 0 11 12"><g fill="none" stroke="#3b82f6" stroke-opacity=".75" stroke-width="1" stroke-linejoin="round"><path d="M5.5 0.8L10 2.5V6c0 2.7-2 4.5-4.5 5.3C3 10.5 1 8.7 1 6V2.5z"/><path d="M3.7 6.1L5 7.3 7.4 4.8"/></g></svg>
<div class="t" style="left:229px;width:40px;text-align:center;top:473px">7</div>
<div class="t" style="left:309px;width:90px;text-align:center;top:473px">125</div>
<div class="t" style="left:468px;top:473px">工程部</div>
<div class="t" style="left:1563px;width:120px;text-align:center;top:473px;color:#3aa82a">正常</div>
<div class="a" style="left:1702px;top:469px;width:56px;height:22px;border:1px solid #3aa82a;border-radius:3px;background:#fff"></div>
<div class="t" style="left:1728px;top:474px;font-size:12px;color:#3aa82a">修改</div>
<svg style="left:1711px;top:475px" width="10" height="10" viewBox="0 0 10 10"><g fill="none" stroke="#3aa82a" stroke-opacity=".75" stroke-width="1" stroke-linecap="round" stroke-linejoin="round"><path d="M4.5 1.2H1.8A.8.8 0 0 0 1 2v6.2a.8.8 0 0 0 .8.8H8a.8.8 0 0 0 .8-.8V5.5"/><path d="M3.5 6.5L3.8 5 8 .8 9.2 2 5 6.2z"/></g></svg>
<div class="a" style="left:1770px;top:469px;width:56px;height:22px;border:1px solid #e02a2a;border-radius:3px;background:#fff"></div>
<div class="t" style="left:1796px;top:474px;font-size:12px;color:#e02a2a">删除</div>
<svg style="left:1779px;top:474px" width="9" height="12" viewBox="0 0 9 12"><g fill="none" stroke="#e02a2a" stroke-opacity=".75" stroke-width="1" stroke-linecap="round" stroke-linejoin="round"><path d="M3 1.2H6M1 2.6H8"/><path d="M1.3 2.6V9.5A1.5 1.5 0 0 0 2.8 11H6.2A1.5 1.5 0 0 0 7.7 9.5V2.6"/><path d="M3.5 5V8.5M5.5 5V8.5"/></g></svg>
<div class="a" style="left:1838px;top:469px;width:56px;height:22px;border:1px solid #3b82f6;border-radius:3px;background:#fff"></div>
<div class="t" style="left:1864px;top:474px;font-size:12px;color:#3b82f6">授权</div>
<svg style="left:1846px;top:474px" width="11" height="12" viewBox="0 0 11 12"><g fill="none" stroke="#3b82f6" stroke-opacity=".75" stroke-width="1" stroke-linejoin="round"><path d="M5.5 0.8L10 2.5V6c0 2.7-2 4.5-4.5 5.3C3 10.5 1 8.7 1 6V2.5z"/><path d="M3.7 6.1L5 7.3 7.4 4.8"/></g></svg>
<div class="t" style="left:229px;width:40px;text-align:center;top:506px">8</div>
<div class="t" style="left:309px;width:90px;text-align:center;top:506px">126</div>
<div class="t" style="left:464px;top:506px">胡测试</div>
<div class="t" style="left:1563px;width:120px;text-align:center;top:506px;color:#3aa82a">正常</div>
<div class="a" style="left:1702px;top:502px;width:56px;height:22px;border:1px solid #3aa82a;border-radius:3px;background:#fff"></div>
<div class="t" style="left:1728px;top:507px;font-size:12px;color:#3aa82a">修改</div>
<svg style="left:1711px;top:508px" width="10" height="10" viewBox="0 0 10 10"><g fill="none" stroke="#3aa82a" stroke-opacity=".75" stroke-width="1" stroke-linecap="round" stroke-linejoin="round"><path d="M4.5 1.2H1.8A.8.8 0 0 0 1 2v6.2a.8.8 0 0 0 .8.8H8a.8.8 0 0 0 .8-.8V5.5"/><path d="M3.5 6.5L3.8 5 8 .8 9.2 2 5 6.2z"/></g></svg>
<div class="a" style="left:1770px;top:502px;width:56px;height:22px;border:1px solid #e02a2a;border-radius:3px;background:#fff"></div>
<div class="t" style="left:1796px;top:507px;font-size:12px;color:#e02a2a">删除</div>
<svg style="left:1779px;top:507px" width="9" height="12" viewBox="0 0 9 12"><g fill="none" stroke="#e02a2a" stroke-opacity=".75" stroke-width="1" stroke-linecap="round" stroke-linejoin="round"><path d="M3 1.2H6M1 2.6H8"/><path d="M1.3 2.6V9.5A1.5 1.5 0 0 0 2.8 11H6.2A1.5 1.5 0 0 0 7.7 9.5V2.6"/><path d="M3.5 5V8.5M5.5 5V8.5"/></g></svg>
<div class="a" style="left:1838px;top:502px;width:56px;height:22px;border:1px solid #3b82f6;border-radius:3px;background:#fff"></div>
<div class="t" style="left:1864px;top:507px;font-size:12px;color:#3b82f6">授权</div>
<svg style="left:1846px;top:507px" width="11" height="12" viewBox="0 0 11 12"><g fill="none" stroke="#3b82f6" stroke-opacity=".75" stroke-width="1" stroke-linejoin="round"><path d="M5.5 0.8L10 2.5V6c0 2.7-2 4.5-4.5 5.3C3 10.5 1 8.7 1 6V2.5z"/><path d="M3.7 6.1L5 7.3 7.4 4.8"/></g></svg>
<div class="t" style="left:1509px;top:895px;font-size:14px;word-spacing:0px">共 8 条</div>
<div class="a" style="left:1570px;top:888px;width:28px;height:28px;border:1px solid #dcdfe6;border-radius:4px;background:#fff"></div>
<svg style="left:1580px;top:897px" width="7" height="11" viewBox="0 0 7 11"><path d="M6 1L1.5 5.5 6 10" fill="none" stroke="#a8abb2" stroke-width="1.2"/></svg>
<div class="a" style="left:1606px;top:888px;width:28px;height:28px;border:1.3px solid #3b82f6;border-radius:4px;background:#fff"></div>
<div class="t" style="left:1606px;width:28px;text-align:center;top:895px;color:#3b82f6">1</div>
<div class="a" style="left:1642px;top:888px;width:28px;height:28px;border:1px solid #dcdfe6;border-radius:4px;background:#fff"></div>
<svg style="left:1653px;top:897px" width="7" height="11" viewBox="0 0 7 11"><path d="M1 1L5.5 5.5 1 10" fill="none" stroke="#a8abb2" stroke-width="1.2"/></svg>
<div class="a" style="left:1679px;top:888px;width:81px;height:28px;border:1px solid #dcdfe6;border-radius:4px;background:#fff"></div>
<div class="t" style="left:1690px;top:895px;font-size:14px">50 / 页</div>
<svg style="left:1738px;top:899px" width="11" height="7" viewBox="0 0 11 7"><path d="M1 1L5.5 5.5 10 1" fill="none" stroke="#a8abb2" stroke-width="1.2"/></svg>
<div class="t" style="left:1769px;top:895px;font-size:14px;word-spacing:1px">显示 1 - 8 条，共 8 条</div>
<!-- watermark (under mask) -->
<svg style="left:1786px;top:878px" width="28" height="24" viewBox="0 0 28 24" opacity=".85"><path d="M10 0H16L7 11.5 12 21H6L0 11z" fill="#7a9ad6"/><path d="M12 3 C18 0 23 2 25 8 L14 13 C13 9 12 6 12 3z" fill="#ffa07a"/><path d="M8 20 C12 14 17 12 22 13 L16 18z" fill="#7a9ad6"/></svg>
<div class="t" style="left:1813px;top:877px;font-size:23px;font-weight:bold;color:#8aa3d0;letter-spacing:0px">泛普软件</div>
<div class="t" style="left:1789px;top:899px;font-family:'Liberation Serif',serif;font-weight:bold;font-size:13px;color:#f5a07a;letter-spacing:0.4px">www.fanpusoft.com</div>


<div id="mask" class="a"></div>
<div id="topline" class="a"></div>
<div class="a" style="left:480px;top:306px;width:961px;height:319px;background:#fff;border-radius:4px"></div>
<div class="t" style="left:503px;top:330px;font-size:18px;color:#303133">新增角色</div>
<div class="a" style="left:1397px;top:328px;width:22px;height:22px;background:#e6e6e6;border-radius:4px"></div>
<svg style="left:1401px;top:332px" width="14" height="14" viewBox="0 0 14 14"><path d="M1.5 1.5L12.5 12.5M12.5 1.5L1.5 12.5" fill="none" stroke="#606060" stroke-width="1.4"/></svg>
<!-- form table -->
<div class="a" style="left:504px;top:374px;width:913px;height:158px;border:1px solid #80adf7"></div>
<div class="a" style="left:505px;top:375px;width:99px;height:156px;background:#f4f8ff"></div>
<div class="a" style="left:961px;top:375px;width:99px;height:73px;background:#f4f8ff"></div>
<div class="a" style="left:604px;top:375px;width:1px;height:156px;background:#80adf7"></div>
<div class="a" style="left:960px;top:375px;width:1px;height:73px;background:#80adf7"></div>
<div class="a" style="left:1060px;top:375px;width:1px;height:73px;background:#80adf7"></div>
<div class="a" style="left:505px;top:411px;width:911px;height:1px;background:#80adf7"></div>
<div class="a" style="left:505px;top:448px;width:911px;height:1px;background:#80adf7"></div>
<div class="t" style="left:519px;top:387px;color:#f56c6c;font-size:17px">*</div>
<div class="t" style="left:530px;top:385px;color:#303133">角色名称:</div>
<div class="t" style="left:530px;top:422px;color:#303133">角色顺序:</div>
<div class="t" style="left:530px;top:483px;color:#303133">角色备注:</div>
<div class="t" style="left:975px;top:387px;color:#f56c6c;font-size:17px">*</div>
<div class="t" style="left:986px;top:385px;color:#303133">角色编码:</div>
<div class="t" style="left:986px;top:422px;color:#303133">角色状态:</div>
<div class="inp" style="left:609px;top:379px;width:347px;height:28px"></div>
<div class="t ph" style="left:619px;top:385px">请输入角色名称</div>
<div class="inp" style="left:609px;top:416px;width:347px;height:28px"></div>
<div class="t" style="left:619px;top:423px">0</div>
<div class="inp" style="left:1065px;top:379px;width:347px;height:28px"></div>
<div class="t ph" style="left:1075px;top:385px">请输入角色编码</div>
<div class="a" style="left:1065px;top:421px;width:59px;height:19px;border-radius:10px;background:#3b82f6"></div>
<div class="t" style="left:1073px;top:423px;color:#fff;font-size:14px">正常</div>
<div class="a" style="left:1108px;top:423px;width:14px;height:14px;border-radius:50%;background:#fff"></div>
<div class="inp" style="left:609px;top:453px;width:803px;height:74px"></div>
<div class="t ph" style="left:619px;top:460px">请选择角色备注</div>
<!-- footer buttons -->
<div class="btn" style="left:1261px;top:576px;width:72px;border-color:#dcdfe6"></div>
<svg style="left:1275px;top:584px" width="11" height="11" viewBox="0 0 11 11"><path d="M.5 .5L10.5 10.5M10.5 .5L.5 10.5" fill="none" stroke="#303133" stroke-width="1.3"/></svg>
<div class="t" style="left:1295px;top:583px;color:#303133">取消</div>
<div class="btn" style="left:1345px;top:576px;width:72px;border-color:#3b82f6"></div>
<svg style="left:1357px;top:584px" width="13" height="11" viewBox="0 0 13 11"><path d="M.8 6L4.5 9.8 12.2 .8" fill="none" stroke="#3b82f6" stroke-width="1.3"/></svg>
<div class="t" style="left:1378px;top:583px;color:#3b82f6">确定</div>

<!-- orange scroll thing -->
<div class="a" style="left:1906px;top:561px;width:12px;height:76px;border-radius:6px;background:#d0d0d0"></div>
<div class="a" style="left:1907px;top:562px;width:10px;height:74px;border-radius:5px;background:linear-gradient(#686868 0,#686868 10px,#ff8a30 10px,#ff9040 80%,#ffd080 100%)"></div>

</body></html>
